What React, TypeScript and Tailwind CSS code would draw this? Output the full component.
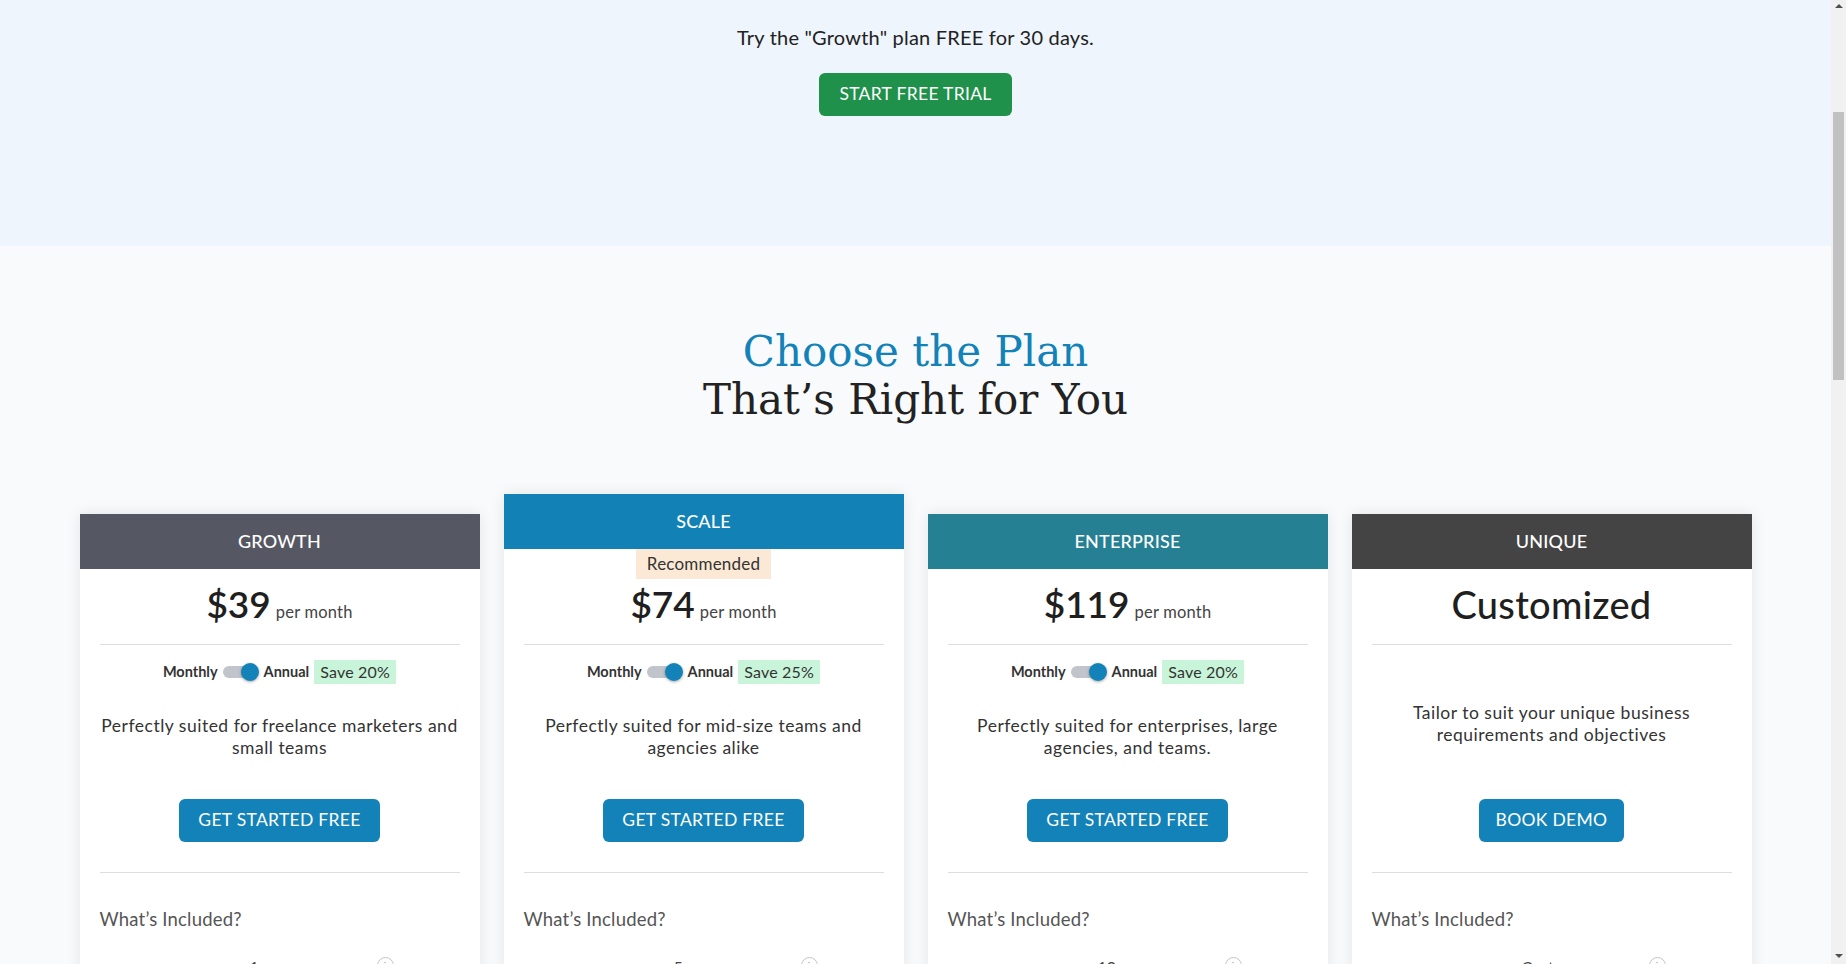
import React, { useLayoutEffect } from "react";

type Plan = {
  name: string;
  header: string;
  price?: string;
  custom?: boolean;
  save?: string;
  desc: string[];
  cta: string;
  ctaWidth: string;
  recommended?: boolean;
  features: string[];
};

const plans: Plan[] = [
  {
    name: "GROWTH",
    header: "bg-[#555763]",
    price: "$39",
    save: "Save 20%",
    desc: ["Perfectly suited for freelance marketers and", "small teams"],
    cta: "GET STARTED FREE",
    ctaWidth: "w-[201px]",
    features: ["1 user", "Email marketing", "Landing pages", "Forms & popups", "Basic automation", "Email support"],
  },
  {
    name: "SCALE",
    header: "bg-[#1282b6]",
    price: "$74",
    save: "Save 25%",
    desc: ["Perfectly suited for mid-size teams and", "agencies alike"],
    cta: "GET STARTED FREE",
    ctaWidth: "w-[201px]",
    recommended: true,
    features: ["5 users", "Everything in Growth", "Advanced automation", "A/B testing", "Lead scoring", "Priority support"],
  },
  {
    name: "ENTERPRISE",
    header: "bg-[#258094]",
    price: "$119",
    save: "Save 20%",
    desc: ["Perfectly suited for enterprises, large", "agencies, and teams."],
    cta: "GET STARTED FREE",
    ctaWidth: "w-[201px]",
    features: ["10 users", "Everything in Scale", "Custom reporting", "Dedicated manager", "SSO & security", "Phone support"],
  },
  {
    name: "UNIQUE",
    header: "bg-[#444444]",
    custom: true,
    desc: ["Tailor to suit your unique business", "requirements and objectives"],
    cta: "BOOK DEMO",
    ctaWidth: "w-[145px]",
    features: ["Custom users", "Custom onboarding", "Custom integrations", "Dedicated team", "SLA guarantee", "24/7 support"],
  },
];

function Toggle({ save }: { save: string }) {
  return (
    <div className="mt-[15px] flex h-[24px] items-center justify-center">
      <span className="text-[14.5px] font-bold text-[#333]">Monthly</span>
      <span className="relative ml-[5px] h-[18px] w-[36px]">
        <span className="absolute left-0 top-[3px] h-[12px] w-[32px] rounded-full bg-[#c1c4ca]" />
        <span className="absolute right-0 top-0 h-[18px] w-[18px] rounded-full bg-[#1282b8] shadow-[0_1px_3px_rgba(0,0,0,0.35)]" />
      </span>
      <span className="ml-[5px] text-[14.5px] font-bold text-[#333]">Annual</span>
      <span className="ml-[5px] flex h-[24px] items-center bg-[#c8f5da] px-[6px] text-[16px] tracking-[0.2px] text-[#333]">
        {save}
      </span>
    </div>
  );
}

function Card({ plan }: { plan: Plan }) {
  return (
    <div className={`bg-white shadow-[0_0_14px_rgba(0,0,0,0.09)] ${plan.recommended ? "" : "mt-[20px]"}`}>
      <div
        className={`flex h-[55px] items-center justify-center text-[18px] font-medium tracking-[0.2px] text-white ${plan.header}`}
      >
        {plan.name}
      </div>
      <div className="px-5">
        {plan.recommended ? (
          <div className="flex justify-center">
            <span className="flex h-[30px] w-[135px] items-center justify-center bg-[#fbe9d5] text-[17px] tracking-[0.2px] text-[#333]">
              Recommended
            </span>
          </div>
        ) : null}
        <div className={`flex h-[46px] items-baseline justify-center ${plan.recommended ? "mt-[2px]" : "mt-[12px]"}`}>
          {plan.custom ? (
            <span className="text-[38px] leading-[46px] font-medium tracking-[0.3px] text-[#1f1f1f]">Customized</span>
          ) : (
            <>
              <span className="text-[37px] leading-[46px] font-semibold text-[#1f1f1f]">{plan.price}</span>
              <span className="ml-[5px] text-[16.5px] tracking-[0.2px] text-[#444]">per month</span>
            </>
          )}
        </div>
        <div className="mt-[17px] h-px bg-[#dedede]" />
        {plan.custom ? (
          <div className="mt-[57px] text-center text-[17.5px] leading-[22px] tracking-[0.5px] text-[#333]">
            {plan.desc.map((l) => (
              <div key={l}>{l}</div>
            ))}
          </div>
        ) : (
          <>
            <Toggle save={plan.save!} />
            <div className="mt-[31px] text-center text-[17.5px] leading-[22px] tracking-[0.5px] text-[#333]">
              {plan.desc.map((l) => (
                <div key={l}>{l}</div>
              ))}
            </div>
          </>
        )}
        <div className={`flex justify-center ${plan.custom ? "mt-[53px]" : "mt-[40px]"}`}>
          <button
            className={`flex h-[43px] items-center justify-center rounded-[6px] bg-[#1282b8] text-[17.5px] tracking-[0.3px] text-white ${plan.ctaWidth}`}
          >
            {plan.cta}
          </button>
        </div>
        <div className="mt-[30px] h-px bg-[#dedede]" />
        <div className="mt-[34px] text-[18.5px] leading-[24px] tracking-[0.2px] text-[#555]">What’s Included?</div>
        <ul className="mt-[24px] pb-8">
          {plan.features.map((f) => (
            <li key={f} className="flex h-[40px] items-start justify-between text-[16px] text-[#444]">
              <span className="whitespace-nowrap pl-[150px]">{f}</span>
              <span className="mr-[66px] mt-[2px] flex h-[17px] w-[17px] items-center justify-center rounded-full border border-[#c4c4c4] text-[10px] text-[#999]">
                i
              </span>
            </li>
          ))}
        </ul>
      </div>
    </div>
  );
}

function FakeScrollbar() {
  return (
    <div className="fixed right-0 top-0 flex h-screen w-[15px] flex-col items-center bg-[#f1f1f1]">
      <div className="mt-[4px] h-0 w-0 border-x-[4px] border-b-[4px] border-x-transparent border-b-[#505050]" />
      <div className="mt-[104px] h-[268px] w-[11px] bg-[#c1c1c1]" />
      <div className="flex-1" />
      <div className="mb-[6px] h-0 w-0 border-x-[4px] border-t-[4px] border-x-transparent border-t-[#505050]" />
    </div>
  );
}

export default function App() {
  useLayoutEffect(() => {
    window.scrollTo(0, 349);
  }, []);

  return (
    <div className="min-h-[3360px] bg-[#f8fafc] pr-[15px]" style={{ fontFamily: "Lato, 'Noto Sans', sans-serif" }}>
      <section className="flex h-[595px] flex-col items-center bg-[#eef5fd]">
        <div className="flex h-[349px] flex-col items-center justify-center">
          <h1 className="text-[44px] text-[#1f1f1f]" style={{ fontFamily: "'DejaVu Serif', serif" }}>
            Pricing
          </h1>
        </div>
        <p className="mt-[23px] text-[20px] leading-[28px] tracking-[0.2px] text-[#222]">
          Try the "Growth" plan FREE for 30 days.
        </p>
        <button className="mt-[22px] flex h-[43px] w-[193px] items-center justify-center rounded-[6px] bg-[#1f914b] text-[17.5px] tracking-[0.3px] text-white">
          START FREE TRIAL
        </button>
      </section>
      <section className="pt-[82px]">
        <h2 className="text-center text-[42px] leading-[48px] font-normal text-[#222]" style={{ fontFamily: "'DejaVu Serif', serif" }}>
          <span className="block text-[#1282b8]">Choose the Plan</span>
          <span className="block">That’s Right for You</span>
        </h2>
        <div className="mx-auto mt-[70px] grid max-w-[1672px] grid-cols-4 items-start gap-6">
          {plans.map((p) => (
            <Card key={p.name} plan={p} />
          ))}
        </div>
      </section>
      <FakeScrollbar />
    </div>
  );
}
